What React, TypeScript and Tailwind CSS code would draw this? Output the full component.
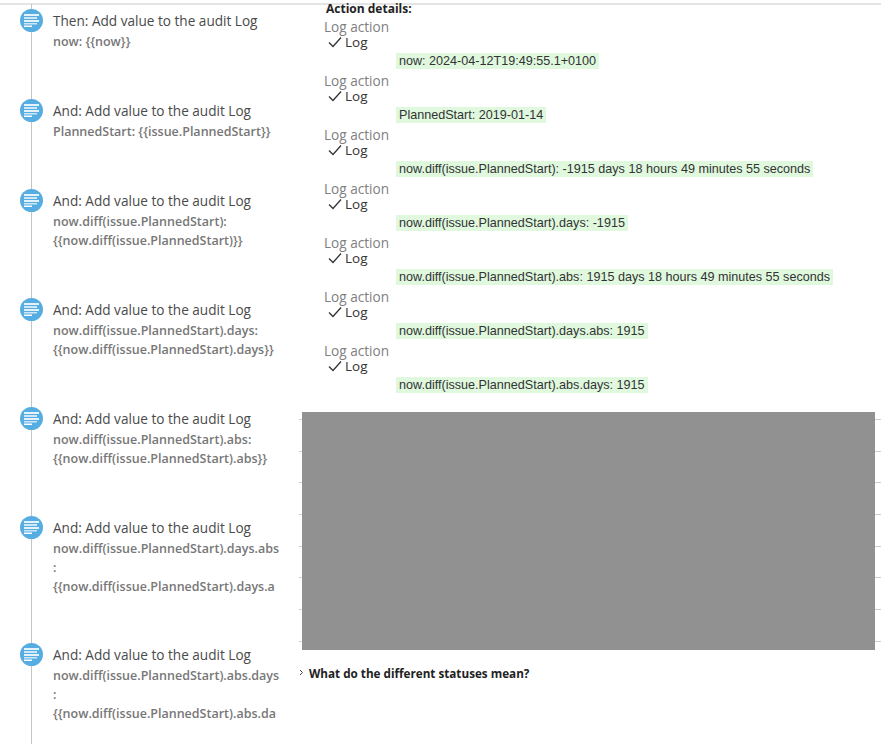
import React from "react";

const steps = [
    { title: "Then: Add value to the audit Log", lines: ["now: {{now}}"], height: "h-[90px]" },
    { title: "And: Add value to the audit Log", lines: ["PlannedStart: {{issue.PlannedStart}}"], height: "h-[90px]" },
    {
        title: "And: Add value to the audit Log",
        lines: ["now.diff(issue.PlannedStart):", "{{now.diff(issue.PlannedStart)}}"],
        height: "h-[109px]",
    },
    {
        title: "And: Add value to the audit Log",
        lines: ["now.diff(issue.PlannedStart).days:", "{{now.diff(issue.PlannedStart).days}}"],
        height: "h-[109px]",
    },
    {
        title: "And: Add value to the audit Log",
        lines: ["now.diff(issue.PlannedStart).abs:", "{{now.diff(issue.PlannedStart).abs}}"],
        height: "h-[109px]",
    },
    {
        title: "And: Add value to the audit Log",
        lines: ["now.diff(issue.PlannedStart).days.abs", ":", "{{now.diff(issue.PlannedStart).days.a"],
        height: "h-[127px]",
    },
    {
        title: "And: Add value to the audit Log",
        lines: ["now.diff(issue.PlannedStart).abs.days", ":", "{{now.diff(issue.PlannedStart).abs.da"],
        height: "h-[127px]",
    },
];

const logs = [
    "now: 2024-04-12T19:49:55.1+0100",
    "PlannedStart: 2019-01-14",
    "now.diff(issue.PlannedStart): -1915 days 18 hours 49 minutes 55 seconds",
    "now.diff(issue.PlannedStart).days: -1915",
    "now.diff(issue.PlannedStart).abs: 1915 days 18 hours 49 minutes 55 seconds",
    "now.diff(issue.PlannedStart).days.abs: 1915",
    "now.diff(issue.PlannedStart).abs.days: 1915",
];

const tableRows = [0, 1, 2, 3, 4, 5, 6, 7];

function LogIcon() {
    return (
        <div className="z-10 flex h-[23px] w-[23px] shrink-0 items-center justify-center rounded-full bg-[#55ade2]">
            <svg width="15" height="13" viewBox="0 0 15 13">
                <rect x="0" y="0" width="15" height="2" fill="#e4f2fb" />
                <rect x="0" y="3" width="13" height="2" fill="#cfe7f6" />
                <rect x="0" y="6" width="15" height="2" fill="#e4f2fb" />
                <rect x="0" y="9" width="13" height="1.5" fill="#cfe7f6" />
                <rect x="0" y="11.5" width="8" height="1.5" fill="#ffffff" />
            </svg>
        </div>
    );
}

export default function App() {
    return (
        <div className="h-[744px] w-[881px] overflow-hidden bg-white font-['Open_Sans',sans-serif]">
            <div className="flex h-full flex-col">
                <div className="h-[5px] shrink-0 border-b-2 border-[#e4e4e4]"></div>
                <div className="flex">
                    <div className="relative w-[297px] shrink-0 pt-[4px]">
                        <div className="absolute top-[-1px] bottom-[-100px] left-[31px] w-[1px] bg-[#c4c4c4]"></div>
                        {steps.map((step, i) => (
                            <div key={i} className={"flex items-start pl-[20px] " + step.height}>
                                <LogIcon />
                                <div className="ml-[10px] w-[230px]">
                                    <div className="text-[13.6px] leading-[23px] text-[#4a4a4a]">{step.title}</div>
                                    {step.lines.map((line, j) => (
                                        <div key={j} className="text-[12.5px] leading-[19px] font-semibold whitespace-nowrap text-[#777777]">
                                            {line}
                                        </div>
                                    ))}
                                </div>
                            </div>
                        ))}
                    </div>
                    <div className="flex-1">
                        <div className="mt-[-4px] ml-[29px] text-[12px] leading-[16px] font-bold text-[#222222]">Action details:</div>
                        <div className="ml-[27px]">
                            {logs.map((log, i) => (
                                <div key={i} className="h-[54px]">
                                    <div className="text-[13.6px] leading-[19px] text-[#808080]">Log action</div>
                                    <div className="mt-[-1px] flex h-[14px] items-center pl-[4px] text-[13.5px] text-[#333333]">
                                        <svg width="14" height="12" viewBox="0 0 14 12" className="mr-[3px]">
                                            <path d="M1 6.5 L5 10.5 L13 1.5" fill="none" stroke="#333333" strokeWidth="1.3" />
                                        </svg>
                                        Log
                                    </div>
                                    <div className="mt-[4px] ml-[72px] flex">
                                        <span className="h-[16px] bg-[#dff8de] px-[3px] font-['Liberation_Sans',sans-serif] text-[12.6px] leading-[16px] whitespace-nowrap text-[#333333]">
                                            {log}
                                        </span>
                                    </div>
                                </div>
                            ))}
                        </div>
                        <div className="relative mt-[17px] ml-[2px] h-[238px] pt-[7px]">
                            {tableRows.map((row) => (
                                <div key={row} className="h-[31.7px] border-t border-[#cfcfcf]"></div>
                            ))}
                            <div className="absolute top-0 left-[3px] h-[238px] w-[573px] bg-[#919191]"></div>
                        </div>
                        <div className="mt-[15px] flex items-center text-[11.7px] font-bold text-[#222222]">
                            <svg width="5" height="7" viewBox="0 0 5 7" className="mr-[5px] ml-[2px] mb-[3px]">
                                <path d="M1 1 L3.5 3.5 L1 6" fill="none" stroke="#444444" strokeWidth="1" />
                            </svg>
                            What do the different statuses mean?
                        </div>
                    </div>
                </div>
            </div>
        </div>
    );
}
